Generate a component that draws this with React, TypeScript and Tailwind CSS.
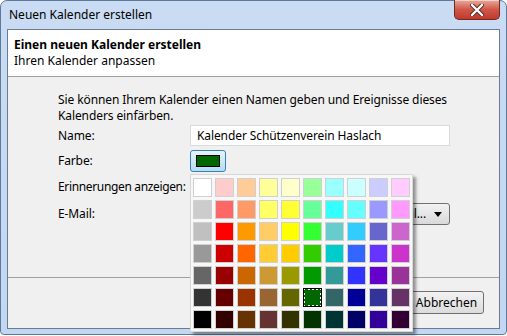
import React from "react";

const colors = [
  ["#ffffff", "#ffcccc", "#ffcc99", "#ffff99", "#ffffcc", "#99ff99", "#99ffff", "#ccffff", "#ccccff", "#ffccff"],
  ["#cccccc", "#ff6666", "#ff9966", "#ffff66", "#ffff33", "#66ff99", "#33ffff", "#66ffff", "#9999ff", "#ff99ff"],
  ["#c0c0c0", "#ff0000", "#ff9900", "#ffcc66", "#ffff00", "#33ff33", "#66cccc", "#33ccff", "#6666cc", "#cc66cc"],
  ["#999999", "#cc0000", "#ff6600", "#ffcc33", "#ffcc00", "#33cc00", "#00cccc", "#3366ff", "#6633ff", "#cc33cc"],
  ["#666666", "#990000", "#cc6600", "#cc9933", "#999900", "#009900", "#339999", "#3333ff", "#6600cc", "#993399"],
  ["#333333", "#660000", "#993300", "#996633", "#666600", "#006600", "#336666", "#000099", "#333399", "#663366"],
  ["#000000", "#330000", "#663300", "#663333", "#333300", "#003300", "#003333", "#000066", "#330099", "#330033"],
];

function ColorGrid() {
  return (
    <div className="absolute left-[190px] top-[174px] w-[223px] h-[158px] bg-[#f7f7f7] border border-[#d8d8d8] shadow-[3px_3px_3px_rgba(0,0,0,0.4)] pl-[2px] pt-[3px] flex flex-col gap-[3px]">
      {colors.map((row, r) => (
        <div key={r} className="flex gap-[3px]">
          {row.map((c, i) => {
            const selected = r === 5 && i === 5;
            return (
              <div
                key={i}
                className={
                  selected
                    ? "w-[19px] h-[19px] border-2 border-dotted border-white outline outline-1 outline-black -outline-offset-1"
                    : "w-[19px] h-[19px] border border-[#d0d0d0]"
                }
                style={{ backgroundColor: c }}
              />
            );
          })}
        </div>
      ))}
    </div>
  );
}

export default function App() {
  return (
    <div className="w-[507px] h-[336px] bg-white relative overflow-hidden font-['Segoe_UI','Noto_Sans',sans-serif] text-[12px] text-black">
      <div className="h-[335px] rounded-t-[7px] rounded-b-[4px] border border-[#5f7a99] bg-gradient-to-b from-[#c9dcf3] to-[#c2d7f1] px-[6px] pb-[5px] flex flex-col">
        {/* title bar */}
        <div className="h-[28px] flex items-center pl-[2px] relative">
          <span className="leading-none">Neuen Kalender erstellen</span>
          <div className="absolute right-[0px] -top-[1px] w-[46px] h-[20px] rounded-b-[5px] border border-[#6f2a22] border-t-0 bg-gradient-to-b from-[#e9a99b] via-[#d0564a] to-[#c0392b] flex items-center justify-center shadow-[inset_0_1px_0_rgba(255,255,255,0.5)]">
            <svg width="14" height="12" viewBox="0 0 14 12">
              <path d="M2 1 L12 11 M12 1 L2 11" stroke="#5a2a24" strokeWidth="4.2" strokeLinecap="round" />
              <path d="M2 1 L12 11 M12 1 L2 11" stroke="#ffffff" strokeWidth="2.4" strokeLinecap="round" />
            </svg>
          </div>
        </div>

        {/* content */}
        <div className="flex-1 border border-[#6c7c8e] bg-[#f0f0f0] flex flex-col">
          <div className="h-[47px] bg-white border-b border-[#a0a0a0] pl-[6px] pt-[7px] leading-[16px]">
            <div className="font-bold">Einen neuen Kalender erstellen</div>
            <div>Ihren Kalender anpassen</div>
          </div>

          <div className="h-[201px] border-b border-[#a0a0a0] pl-[50px] pt-[15px] leading-[16px] tracking-[-0.1px]">
            <div className="whitespace-nowrap">Sie können Ihrem Kalender einen Namen geben und Ereignisse dieses</div>
            <div>Kalenders einfärben.</div>

            <div className="flex items-center mt-[1px] h-[21px]">
              <div className="w-[132px] whitespace-nowrap">Name:</div>
              <div className="w-[260px] h-[21px] bg-white border border-[#d6dbe0] flex items-center pl-[6px]">
                Kalender Schützenverein Haslach
              </div>
            </div>

            <div className="flex items-center mt-[4px] h-[22px]">
              <div className="w-[132px] whitespace-nowrap">Farbe:</div>
              <div className="w-[36px] h-[22px] rounded-[3px] border border-[#3c7fb1] bg-gradient-to-b from-[#e5f4fc] to-[#b3dcf3] flex items-center justify-center">
                <div className="w-[24px] h-[12px] bg-[#006600] border border-black" />
              </div>
            </div>

            <div className="flex items-center mt-[4px] h-[22px]">
              <div className="w-[132px] whitespace-nowrap tracking-[-0.35px]">Erinnerungen anzeigen:</div>
            </div>

            <div className="flex items-center mt-[5px] h-[22px]">
              <div className="w-[132px] whitespace-nowrap">E-Mail:</div>
              <div className="w-[260px] h-[22px] rounded-[3px] border border-[#707070] bg-gradient-to-b from-[#f2f2f2] to-[#d9d9d9] flex items-center justify-end pr-[7px] gap-[8px]">
                <span className="whitespace-nowrap">Keine E-Mail...</span>
                <svg width="8" height="5" viewBox="0 0 8 5">
                  <path d="M0 0 H8 L4 5 Z" fill="#000" />
                </svg>
              </div>
            </div>
          </div>

          <div className="flex-1 flex justify-end items-start pt-[13px] pr-[15px] gap-[8px]">
            <div className="w-[75px] h-[23px] rounded-[3px] border border-[#707070] bg-gradient-to-b from-[#f2f2f2] to-[#dcdcdc] flex items-center justify-center">
              OK
            </div>
            <div className="w-[75px] h-[23px] rounded-[3px] border border-[#707070] bg-gradient-to-b from-[#f2f2f2] to-[#dcdcdc] flex items-center justify-center">
              Abbrechen
            </div>
          </div>
        </div>
      </div>

      <ColorGrid />
    </div>
  );
}
